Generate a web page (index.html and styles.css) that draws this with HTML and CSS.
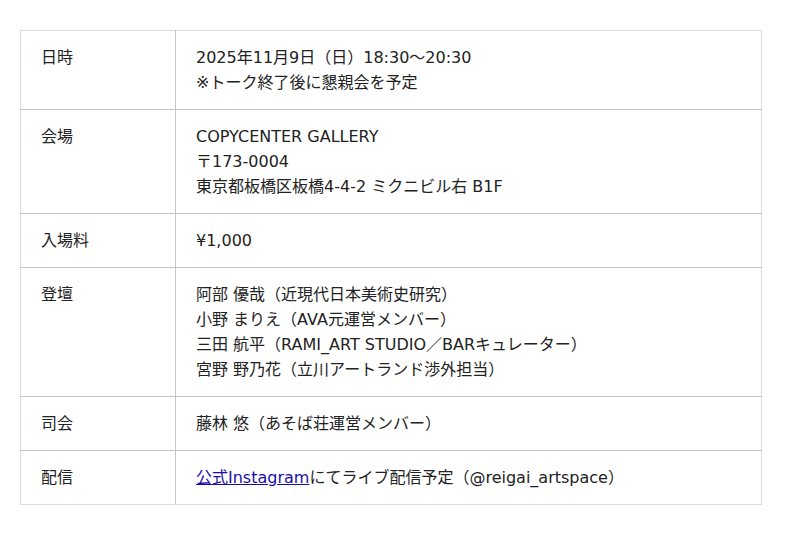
FILE: index.html
```html
<!DOCTYPE html>
<html lang="ja">
<head>
<meta charset="utf-8">
<link rel="stylesheet" href="styles.css">
</head>
<body>
<div class="wrap">
<table class="info">
<tr><th>日時</th><td>2025年11月9日（日）18:30〜20:30<br>※トーク終了後に懇親会を予定</td></tr>
<tr><th>会場</th><td>COPYCENTER GALLERY<br>〒173-0004<br>東京都板橋区板橋4-4-2 ミクニビル右 B1F</td></tr>
<tr><th>入場料</th><td>¥1,000</td></tr>
<tr><th>登壇</th><td>阿部 優哉（近現代日本美術史研究）<br>小野 まりえ（AVA元運営メンバー）<br>三田 航平（RAMI_ART STUDIO／BARキュレーター）<br>宮野 野乃花（立川アートランド渉外担当）</td></tr>
<tr><th>司会</th><td>藤林 悠（あそば荘運営メンバー）</td></tr>
<tr><th>配信</th><td><a href="#">公式Instagram</a>にてライブ配信予定（@reigai_artspace）</td></tr>
</table>
</div>
</body>
</html>
```
FILE: styles.css
```css
html, body { margin: 0; padding: 0; background: #fff; }
body { font-family: "DejaVu Sans", "Noto Sans CJK JP", sans-serif; font-size: 16px; color: #222; }
.wrap { padding: 30px 20px; }
.info { width: 742px; border-collapse: collapse; line-height: 25px; }
.info th, .info td { border: 1px solid #c4c4c4; padding: 14px 20px; text-align: left; vertical-align: top; font-weight: normal; }
.info th { width: 114px; border-left-color: #ddd; }
.info td { border-right-color: #ddd; }
.info tr:first-child th, .info tr:first-child td { border-top-color: #ddd; }
.info tr:last-child th, .info tr:last-child td { border-bottom-color: #ddd; }
.info a { color: #1a0dab; text-decoration: underline; }
```
